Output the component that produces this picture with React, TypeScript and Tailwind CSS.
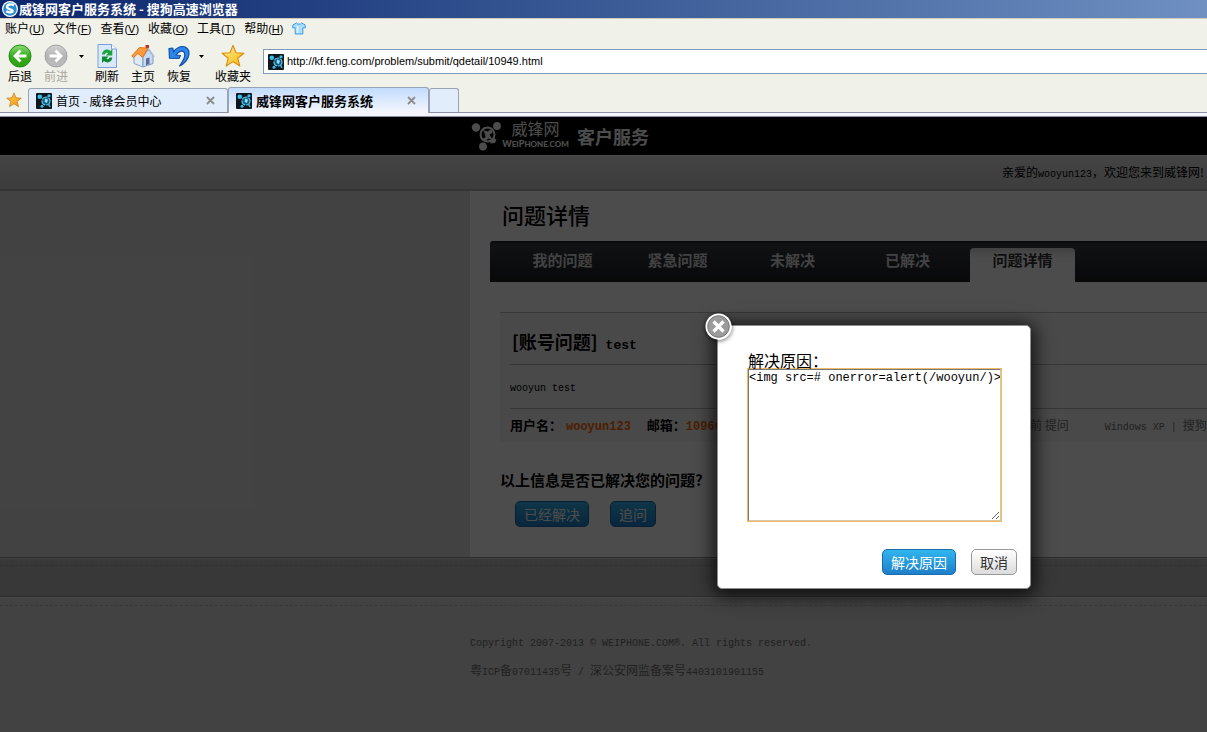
import type { ReactNode } from "react";

const MENUS = [
  ["账户", "U"],
  ["文件", "F"],
  ["查看", "V"],
  ["收藏", "O"],
  ["工具", "T"],
  ["帮助", "H"],
];

const NAV = ["我的问题", "紧急问题", "未解决", "已解决", "问题详情"];

function Mono({ children }: { children: ReactNode }) {
  return <span className="font-['Liberation_Mono',monospace] text-[10px]">{children}</span>;
}

function AppLogo() {
  return (
    <svg width="16" height="16" viewBox="0 0 16 16" aria-hidden="true">
      <circle cx="8" cy="8" r="8" fill="#fff" />
      <circle cx="8" cy="8" r="6.8" fill="#2c8fd0" />
      <path d="M12 4.2C9.5 2.6 5 3.4 5 6.1c0 2.6 5.600 2 5.600 4 0 1.600-3.600 1.800-6.400.2" fill="none" stroke="#fff" strokeWidth="2.400" />
    </svg>
  );
}

function Shirt() {
  return (
    <svg width="14" height="13" viewBox="0 0 14 13" aria-hidden="true">
      <path d="M4.500 1 1 2.800.6 5.800h2.600V12h7.600V5.800h2.600L13 2.800 9.500 1C8.800 2.600 5.200 2.600 4.500 1Z" fill="#a9ddfb" stroke="#3d9be6" />
      <path d="M5.500 4v7" stroke="#e6f7ff" strokeWidth="1.500" />
    </svg>
  );
}

function Arrow({ kind }: { kind: "back" | "forward" }) {
  const back = kind === "back";
  return (
    <svg width="24" height="24" viewBox="0 0 24 24" aria-hidden="true">
      <defs>
        <linearGradient id={kind} x1="0" y1="0" x2="0" y2="1">
          <stop offset="0" stopColor={back ? "#8fdd78" : "#d2d2d2"} />
          <stop offset=".5" stopColor={back ? "#35ad1d" : "#b4b4b4"} />
          <stop offset="1" stopColor={back ? "#2f9f13" : "#bdbdbd"} />
        </linearGradient>
      </defs>
      <circle cx="12" cy="12" r="11" fill={"url(#" + kind + ")"} stroke={back ? "#218a10" : "#a2a2a2"} />
      <path
        d={back ? "M12.500 6.500 7 12l5.500 5.500M7.500 12H18.500" : "M11.500 6.500 17 12l-5.500 5.500M16.500 12H5.500"}
        fill="none"
        stroke="#fff"
        strokeWidth="2.800"
      />
    </svg>
  );
}

function Refresh() {
  return (
    <svg width="24" height="24" viewBox="0 0 24 24" aria-hidden="true">
      <path d="M3 .5h13.500L21.500 5v18.500H3Z" fill="#d9e9fd" stroke="#7f9fd8" />
      <path d="M16.500.5V5h5" fill="#fff" stroke="#7f9fd8" />
      <path d="M7 10.500C7.500 5.500 12.500 4.300 15.300 7L17.300 5v6.500h-6.500l2.200-2.200c-1.200-.9-2.800-.5-3.200 1.200Z" fill="#19a33a" />
      <path d="M17.300 13.500c-.5 5-5.500 6.200-8.300 3.500L7 19v-6.500h6.500l-2.200 2.200c1.200.9 2.800.5 3.200-1.200Z" fill="#0d8a2b" />
    </svg>
  );
}

function Home() {
  return (
    <svg width="24" height="24" viewBox="0 0 24 24" aria-hidden="true">
      <path d="M14.500 1H18v6h-3.500Z" fill="#c22a2a" />
      <path d="M3 11.500 7.500 6 12 13v10l-9-3.500Z" fill="#dfeaf9" stroke="#8aa5cf" />
      <path d="M12 13 17 5.500l5 6.500v7.500L12 23Z" fill="#c8d9f3" stroke="#7f9bc9" />
      <path d="M15 14.500 18.500 13.500v6.500L15 21.200Z" fill="#5a6f98" />
      <path d="M.8 12 8.500 3.500l8.500.8L11.500 13.500 7 9.500l-4.500 4Z" fill="#ff9a3c" stroke="#e07414" strokeLinejoin="round" />
      <path d="m17 4.300 6.200 8.700" stroke="#a9bfe3" strokeWidth="1.800" />
    </svg>
  );
}

function Undo() {
  return (
    <svg width="24" height="24" viewBox="0 0 24 24" aria-hidden="true">
      <path
        d="M2 4.500 5.800 4l.7 3.800C9 4.500 12 2.500 15.500 2.500c4 0 7 3 6.500 7.500-.5 5-4.500 10-9.500 12 3-4 5.500-8 5.300-11.500-.1-2.500-1.800-3.800-3.800-3.300-2 .5-3.800 2-5 3.800l4.500.5L12 14.500l-9.500-.3Z"
        fill="#2f86e6"
        stroke="#0f4fae"
        strokeWidth="1.200"
        strokeLinejoin="round"
      />
    </svg>
  );
}

function Star({ id, className, light, dark, edge }: { id: string; className: string; light: string; dark: string; edge: string }) {
  return (
    <svg className={className} viewBox="0 0 26 26" aria-hidden="true">
      <defs>
        <linearGradient id={id} x1="0" y1="0" x2="1" y2="1">
          <stop offset="0" stopColor={light} />
          <stop offset="1" stopColor={dark} />
        </linearGradient>
      </defs>
      <path
        d="m13 1.500 3.200 8 8.600.5-6.700 5.400 2.300 8.400-7.400-4.700-7.400 4.700 2.300-8.400L1.200 10l8.600-.5Z"
        fill={"url(#" + id + ")"}
        stroke={edge}
        strokeWidth="1.200"
        strokeLinejoin="round"
      />
    </svg>
  );
}

function SiteIcon() {
  return (
    <svg width="16" height="16" viewBox="0 0 16 16" aria-hidden="true" className="shrink-0">
      <rect width="16" height="16" rx="1" fill="#10161b" />
      <circle cx="3.800" cy="3.800" r="2.300" fill="#35c0ee" />
      <circle cx="13" cy="2.800" r="1.600" fill="#35c0ee" />
      <circle cx="6" cy="13.300" r="1.500" fill="#35c0ee" />
      <circle cx="10" cy="8" r="4" fill="#0f5c80" stroke="#5fc6ee" strokeWidth="1.200" strokeDasharray="6 1" />
      <path d="m9 5.500 3 1-1 3.500-2.500-1Z" fill="#8edcf7" />
      <path d="m12.500 11 1.500 3" stroke="#35c0ee" strokeWidth="1.500" />
    </svg>
  );
}

function BrandMark() {
  return (
    <svg width="32" height="30" viewBox="0 0 32 30" aria-hidden="true">
      <g fill="#fff">
        <circle cx="6" cy="6.500" r="4.200" />
        <circle cx="27" cy="5" r="3.900" />
        <circle cx="13" cy="25.500" r="3.900" />
        <path d="m22.500 16.500 4 2-1.500 3.500-5 .5Z" />
      </g>
      <circle cx="17.500" cy="13.500" r="7" fill="none" stroke="#fff" strokeWidth="2" />
      <path d="m13 9 4.500 1.500L21.500 8l1 4-3 1.500 3 5-4-1-3 2.500-4-2 4-1.500-.5-3.500Z" fill="#fff" />
    </svg>
  );
}

function Caret() {
  return (
    <svg width="5" height="3" viewBox="0 0 5 3" aria-hidden="true">
      <path d="M0 0h5L2.500 3Z" fill="#000" />
    </svg>
  );
}

function Tool({ icon, label, className = "" }: { icon: ReactNode; label: string; className?: string }) {
  return (
    <button className={"flex w-9 shrink-0 flex-col items-center whitespace-nowrap text-[12px] leading-4 " + className}>
      {icon}
      {label}
    </button>
  );
}

function CloseTab() {
  return (
    <button aria-label="关闭标签页" className="ml-auto text-[#8c8c8c]">
      <svg width="9" height="9" viewBox="0 0 9 9" aria-hidden="true">
        <path d="m1 1 7 7M8 1 1 8" stroke="currentColor" strokeWidth="1.800" />
      </svg>
    </button>
  );
}

function BlueButton({ children }: { children: ReactNode }) {
  return (
    <button className="h-[26px] whitespace-nowrap rounded-[5px] border border-[#1a6cab] bg-linear-to-b from-[#31b6ef] to-[#1f7fc9] px-2 text-[14px] leading-6 text-white">
      {children}
    </button>
  );
}

function BrowserChrome() {
  return (
    <header className="shrink-0 bg-[#f0f1e9] text-black">
      <div className="flex h-[19px] items-center gap-px border-b border-[#d0cbbd] bg-linear-to-r from-[#0c256c] to-[#6f90c1] pl-0.5 text-[13px] font-bold leading-4 text-white">
        <AppLogo />
        威锋网客户服务系统 - 搜狗高速浏览器
      </div>
      <div className="flex h-5 items-center gap-[9px] pb-0.5 pl-[5px] text-[12px]">
        {MENUS.map(([name, key]) => (
          <button key={key} className="whitespace-nowrap">
            {name}
            <span className="font-['Liberation_Sans',sans-serif] text-[11px]">
              (<u>{key}</u>)
            </span>
          </button>
        ))}
        <button aria-label="皮肤">
          <Shirt />
        </button>
      </div>
      <div className="flex h-12 items-start pl-0.5 pt-[5px]">
        <Tool icon={<Arrow kind="back" />} label="后退" />
        <Tool icon={<Arrow kind="forward" />} label="前进" className="text-[#a9a89e]" />
        <button aria-label="历史" className="flex h-6 w-[15px] items-center justify-center">
          <Caret />
        </button>
        <Tool icon={<Refresh />} label="刷新" />
        <Tool icon={<Home />} label="主页" />
        <Tool icon={<Undo />} label="恢复" />
        <button aria-label="恢复列表" className="flex h-6 w-2 items-center justify-center">
          <Caret />
        </button>
        <Tool
          icon={<Star id="fav" className="size-6" light="#fff3a0" dark="#f7b500" edge="#d98a10" />}
          label="收藏夹"
          className="ml-[10px]"
        />
        <div className="ml-3 mt-[5px] flex h-[25px] flex-1 items-center gap-[3px] border border-r-0 border-[#7f9db9] bg-white pl-1">
          <SiteIcon />
          <input
            aria-label="地址"
            defaultValue="http://kf.feng.com/problem/submit/qdetail/10949.html"
            className="min-w-0 flex-1 font-['Liberation_Sans',sans-serif] text-[11px] outline-none"
          />
        </div>
      </div>
      <div className="flex h-[26px] items-end border-b border-[#8a8fa3]">
        <button aria-label="收藏栏" className="flex h-[25px] w-7 items-center justify-center">
          <Star id="bar" className="size-4" light="#ffc94d" dark="#f39a10" edge="#c47a1a" />
        </button>
        <div className="flex h-6 w-[200px] items-center gap-1 rounded-t-[3px] border border-b-0 border-[#9aa3b5] bg-[#e2edfb] pl-[7px] pr-3 text-[12px]">
          <SiteIcon />
          首页 - 威锋会员中心
          <CloseTab />
        </div>
        <div className="-mb-px flex h-[26px] w-[201px] items-center gap-1 rounded-t-[3px] border border-b-0 border-[#9aa3b5] bg-linear-to-b from-[#c2dcfc] to-[#f6f7fd] pl-[7px] pr-3 text-[13px] font-bold">
          <SiteIcon />
          威锋网客户服务系统
          <CloseTab />
        </div>
        <button aria-label="新标签页" className="h-6 w-[30px] rounded-t-[3px] border border-b-0 border-[#9aa3b5] bg-[#e2edfb]" />
      </div>
      <div className="h-1 border-b border-[#8a8fa3] bg-[#f6f5fd]" />
    </header>
  );
}

function Dialog() {
  return (
    <div
      role="dialog"
      aria-modal="true"
      className="absolute left-[717px] top-[208px] w-[314px] rounded-[5px] border border-[#8e8e8e] bg-white pb-[13px] pl-[30px] pr-[13px] pt-[25px] shadow-[0_3px_18px_4px_rgba(0,0,0,0.75)]"
    >
      <button aria-label="关闭" className="absolute -left-[13px] -top-[13px] size-[27px] rounded-full shadow-[0_1px_4px_rgba(0,0,0,0.6)]">
        <svg width="27" height="27" viewBox="0 0 27 27" aria-hidden="true">
          <circle cx="13.500" cy="13.500" r="13" fill="#fff" />
          <circle cx="13.500" cy="13.500" r="10.800" fill="#9b9b9b" stroke="#777" />
          <path d="m8.500 8.500 10 10M18.500 8.500l-10 10" stroke="#fff" strokeWidth="3.200" />
        </svg>
      </button>
      <label htmlFor="reason" className="block text-[16px] leading-[18px] text-black">
        解决原因：
      </label>
      <textarea
        id="reason"
        spellCheck={false}
        defaultValue="<img src=# onerror=alert(/wooyun/)>"
        className="block h-[152px] w-[253px] overflow-hidden whitespace-pre border border-[#777] border-b-[#d8c8a8] border-r-[#d8c8a8] bg-white font-['Liberation_Mono',monospace] text-[12px] leading-4 text-black shadow-[0_0_0_1px_#eebb66] outline-none"
      />
      <div className="mt-7 flex justify-end gap-[15px]">
        <BlueButton>解决原因</BlueButton>
        <button className="h-[26px] rounded-[5px] border border-[#999] bg-linear-to-b from-white to-[#dcdcdc] px-2 text-[14px] leading-6 text-[#333]">
          取消
        </button>
      </div>
    </div>
  );
}

export default function App() {
  return (
    <div className="flex min-h-screen flex-col overflow-hidden font-['Noto_Sans_CJK_SC',sans-serif]">
      <BrowserChrome />
      <div className="relative flex flex-1 flex-col overflow-hidden bg-[#dedede]">
        <div className="flex h-[38px] shrink-0 items-center bg-black pl-[470px] text-white">
          <BrandMark />
          <div className="flex w-[67px] flex-col items-center whitespace-nowrap pb-1">
            <span className="text-[16px] leading-[20px]">威锋网</span>
            <span className="font-['Lato',sans-serif] text-[9px] font-black leading-[12px]">
              W<span className="text-[8px]">EI</span>P<span className="text-[8px]">HONE.COM</span>
            </span>
          </div>
          <span className="ml-2 text-[18px] font-bold">客户服务</span>
        </div>
        <div className="flex h-9 shrink-0 items-center justify-end border-b-2 border-t border-b-[#b0b0b0] border-t-[#ffffff] bg-linear-to-b from-[#e4e4e4] to-[#cbcbcb] pr-[3px] text-[12px] text-black">
          <p className="whitespace-nowrap">
            亲爱的<Mono>wooyun123</Mono>，欢迎您来到威锋网!
          </p>
        </div>
        <main className="ml-[470px] shrink-0 overflow-hidden bg-white pb-[30px] pl-5 text-black">
          <h1 className="pb-[11px] pl-3 pt-[7px] text-[22px] font-medium leading-8">问题详情</h1>
          <nav className="flex h-[41px] items-end gap-[10px] rounded-tl-[3px] border-t-2 border-[#202226] bg-linear-to-b from-[#3b3d45] to-[#1c1d20] pl-5 text-[15px] font-bold">
            {NAV.map((item) => (
              <a
                key={item}
                href="#"
                className={
                  "h-[34px] w-[105px] shrink-0 pt-px text-center leading-[22px] " +
                  (item === "问题详情"
                    ? "rounded-t-[4px] bg-linear-to-b from-[#d8d8d8] via-white via-30% to-white text-[#333]"
                    : "text-[#dddddd]")
                }
              >
                {item}
              </a>
            ))}
          </nav>
          <section className="ml-[10px] mt-[30px] border-t border-[#c0c0c0] bg-[#f3f3f3] pl-[10px]">
            <h2 className="h-[52px] border-b border-[#b4b4b4] pl-0.5 pt-[14px] text-[18px] font-bold leading-7">
              [账号问题]<span className="ml-2 font-['Liberation_Mono',monospace] text-[13px]">test</span>
            </h2>
            <p className="h-11 border-b border-[#b4b4b4] leading-[38px]">
              <Mono>wooyun test</Mono>
            </p>
            <div className="flex h-[33px] whitespace-nowrap text-[12px] leading-[32px] text-[#717171]">
              <div className="w-[520px] shrink-0 text-[13px] font-bold text-black">
                用户名：
                <span className="ml-1 font-['Liberation_Mono',monospace] text-[12px] text-[#ff6600]">wooyun123</span>
                <span className="ml-4">邮箱：</span>
                <span className="font-['Liberation_Mono',monospace] text-[12px] text-[#ff6600]">10966</span>
              </div>
              <span className="mr-9 shrink-0">前 提问</span>
              <span>
                <Mono>Windows XP | </Mono>搜狗
              </span>
            </div>
          </section>
          <h3 className="ml-[10px] mt-7 text-[15px] font-bold leading-5">以上信息是否已解决您的问题?</h3>
          <div className="ml-[25px] mt-[11px] flex gap-[21px]">
            <BlueButton>已经解决</BlueButton>
            <BlueButton>追问</BlueButton>
          </div>
        </main>
        <div className="h-10 shrink-0 border-y border-b-[#999999] border-t-[#909090] bg-[#bcbcbc] shadow-[inset_0_1px_0_#dddddd]">
          <div className="mt-[7px] border-t border-dashed border-[#a4a4a4]" />
        </div>
        <footer className="flex-1 border-t border-[#f2f2f2] bg-[#dcdcdc] text-[12px] leading-[30px] text-[#717171]">
          <div className="mt-[7px] border-t border-dashed border-[#bbbbbb]" />
          <div className="pl-[470px] pt-5">
            <p className="h-[29px]">
              <Mono>Copyright 2007-2013 © WEIPHONE.COM®. All rights reserved.</Mono>
            </p>
            <p className="h-[29px]">
              粤<Mono>ICP</Mono>备<Mono>07011435</Mono>号<Mono> / </Mono>深公安网监备案号<Mono>4403101901155</Mono>
            </p>
          </div>
        </footer>
        <div className="absolute inset-0 bg-black/70" />
        <Dialog />
      </div>
    </div>
  );
}
